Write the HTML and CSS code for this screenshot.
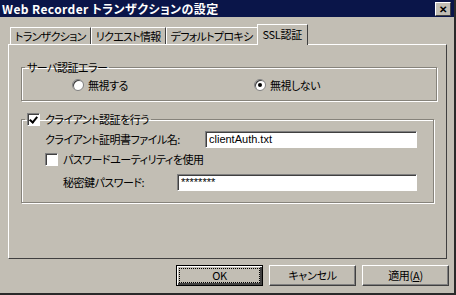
FILE: index.html
```html
<!DOCTYPE html>
<html lang="ja">
<head>
    <meta charset="UTF-8">
    <link rel="stylesheet" href="styles.css">
    <title>Web Recorder トランザクションの設定</title>
</head>
<body>
<div class="window">
    <div class="titlebar">
        <span class="title">Web Recorder トランザクションの設定</span>
        <span class="close">&#x2715;</span>
    </div>

    <div class="tabs">
        <div class="tab">トランザクション</div>
        <div class="tab">リクエスト情報</div>
        <div class="tab">デフォルトプロキシ</div>
        <div class="tab active">SSL認証</div>
    </div>

    <div class="panel">
        <fieldset class="group">
            <legend>サーバ認証エラー</legend>
            <div class="radios">
                <label class="opt"><span class="radio"></span>無視する</label>
                <label class="opt"><span class="radio on"></span>無視しない</label>
            </div>
        </fieldset>

        <fieldset class="group group2">
            <legend><span class="check on"></span>クライアント認証を行う</legend>
            <div class="row">
                <span class="lbl">クライアント証明書ファイル名:</span>
                <input class="field file" type="text" value="clientAuth.txt">
            </div>
            <div class="row">
                <label class="opt"><span class="check"></span>パスワードユーティリティを使用</label>
            </div>
            <div class="row indent">
                <span class="lbl">秘密鍵パスワード:</span>
                <input class="field pass" type="text" value="********">
            </div>
        </fieldset>
    </div>

    <div class="buttons">
        <button class="btn default"><span>OK</span></button>
        <button class="btn">キャンセル</button>
        <button class="btn">適用(<u>A</u>)</button>
    </div>
</div>
</body>
</html>
```

FILE: styles.css
```css
body {
    margin: 0;
    background: #c2beb4;
}

.window {
    width: 454px;
    height: 293px;
    background: #c2beb4;
    border-right: 2px solid #2a2a2a;
    border-bottom: 2px solid #2a2a2a;
    font-family: "Noto Sans CJK JP", "Liberation Sans", sans-serif;
    font-size: 11px;
    letter-spacing: -0.5px;
    font-feature-settings: "palt";
    color: #000;
}

.titlebar {
    height: 17px;
    background: #0a1549;
    display: flex;
    align-items: center;
    justify-content: space-between;
    padding: 0 3px 0 2px;
}

.title {
    color: #fff;
    font-weight: bold;
    font-size: 12px;
    letter-spacing: 0.4px;
}

.close {
    width: 16px;
    height: 14px;
    background: #c2beb4;
    border: 1px solid;
    border-color: #fff #404040 #404040 #fff;
    box-sizing: border-box;
    font-size: 10px;
    font-weight: bold;
    line-height: 12px;
    text-align: center;
    letter-spacing: 0;
}

/* tab strip */
.tabs {
    display: flex;
    align-items: flex-end;
    margin-top: 8px;
    padding-left: 10px;
    height: 19px;
    position: relative;
    z-index: 1;
}

.tab {
    height: 16px;
    padding: 0 4px;
    line-height: 16px;
    letter-spacing: -0.7px;
    border: 1px solid;
    border-color: #fff #404040 transparent #fff;
    border-bottom: none;
    white-space: nowrap;
}

.tab.active {
    margin-left: -1px;
    padding: 0 5px;
    background: #c2beb4;
    margin-bottom: -1px;
    height: 20px;
    line-height: 18px;
    letter-spacing: -0.3px;
}

/* page */
.panel {
    box-sizing: border-box;
    margin: 0 7px 0 8px;
    height: 215px;
    border: 1px solid;
    border-color: #fff #404040 #404040 #fff;
    padding: 15px 12px 0 12px;
}

.group {
    margin: 0;
    padding: 0;
    border: 1px solid #86837b;
    box-shadow: inset 1px 1px 0 #fff, 1px 1px 0 #fff;
}

.group legend {
    padding: 0 2px;
    margin-left: 3px;
    line-height: 14px;
    display: flex;
    align-items: center;
}

.radios {
    display: flex;
    padding: 3px 0 7px 50px;
}

.radios .opt {
    width: 182px;
}

.opt {
    display: flex;
    align-items: center;
}

.radio {
    width: 10px;
    height: 10px;
    border-radius: 50%;
    background: #fff;
    border: 1px solid #808080;
    box-shadow: inset 1px 1px 0 #404040;
    margin-right: 4px;
    position: relative;
}

.radio.on::after {
    content: "";
    position: absolute;
    left: 3px;
    top: 3px;
    width: 4px;
    height: 4px;
    border-radius: 50%;
    background: #000;
}

.check {
    width: 11px;
    height: 11px;
    background: #fff;
    border: 1px solid;
    border-color: #808080 #fff #fff #808080;
    box-shadow: inset 1px 1px 0 #404040;
    margin-right: 5px;
    position: relative;
}

.check.on::after {
    content: "";
    position: absolute;
    left: 3px;
    top: 1px;
    width: 3px;
    height: 6px;
    border: solid #000;
    border-width: 0 2px 2px 0;
    transform: rotate(40deg);
}

.group2 {
    margin-top: 11px;
    padding: 3px 0 10px 0;
}

.row {
    display: flex;
    align-items: center;
    height: 20px;
    padding-left: 23px;
}

.row.indent {
    padding-left: 41px;
    margin-top: 3px;
}

.lbl {
    white-space: nowrap;
}

.field {
    height: 17px;
    box-sizing: border-box;
    border: 1px solid;
    border-color: #808080 #fff #fff #808080;
    box-shadow: inset 1px 1px 0 #404040;
    background: #fff;
    font-family: "Liberation Sans", sans-serif;
    font-size: 11px;
    padding: 0 3px;
    outline: none;
}

.file {
    margin-left: auto;
    margin-right: 16px;
    width: 212px;
}

.pass {
    margin-left: auto;
    margin-right: 16px;
    width: 240px;
}

/* buttons */
.buttons {
    display: flex;
    justify-content: flex-end;
    gap: 6px;
    padding: 6px 5px 0 0;
}

.btn {
    width: 87px;
    height: 21px;
    background: #c2beb4;
    border: 1px solid;
    border-color: #fff #404040 #404040 #fff;
    box-shadow: inset -1px -1px 0 #808080;
    font-family: "Noto Sans CJK JP", sans-serif;
    font-size: 11px;
    letter-spacing: -0.3px;
    font-feature-settings: "palt";
    padding: 0;
    line-height: 17px;
}

.btn.default {
    border: 1px solid #000;
    box-shadow: inset 1px 1px 0 #fff, inset -2px -2px 0 #404040;
    padding: 3px;
}

.btn.default span {
    display: block;
    height: 100%;
    outline: 1px dotted #000;
    text-align: center;
    line-height: 13px;
}
```
